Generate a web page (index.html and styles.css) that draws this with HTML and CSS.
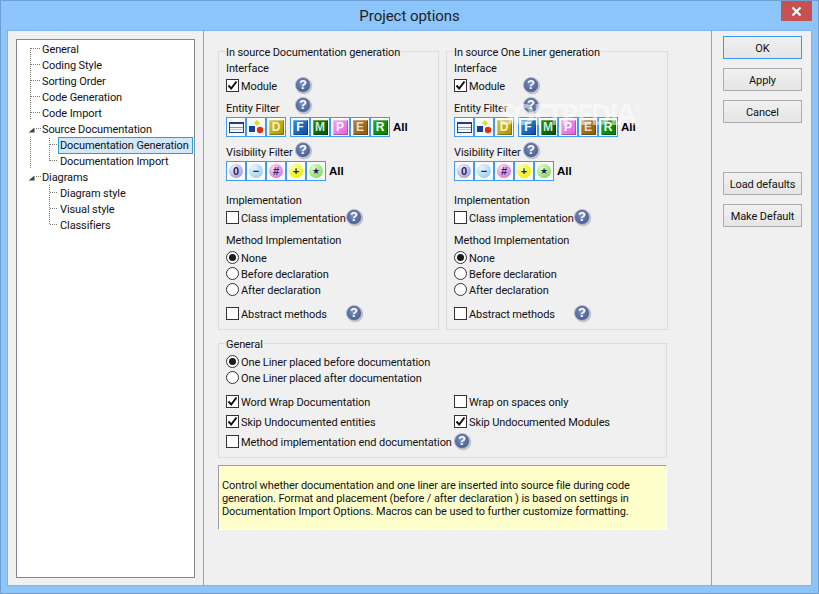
FILE: index.html
```
<!DOCTYPE html>
<html lang="en">
<head>
<meta charset="utf-8">
<title>Project options</title>
<link rel="stylesheet" href="styles.css">
</head>
<body>
<div class="window">
  <header class="titlebar">
    <span class="title">Project options</span>
    <span class="close"><svg width="11" height="11" viewBox="0 0 11 11"><path d="M1.500 1.500l8 8M9.500 1.500l-8 8" stroke="#fff" stroke-width="2.200" fill="none"/></svg></span>
  </header>
  <div class="client">
    <aside class="tree-pane">
      <div class="tree">
        <svg class="tree-lines" width="70" height="200" viewBox="0 0 70 200">
          <g stroke="#777" stroke-dasharray="1 1" fill="none">
            <path d="M13.500 8V80M13.500 97V128M32.500 98V121M32.500 145V185"/>
            <path d="M14 8.500H24M14 24.500H24M14 40.500H24M14 56.500H24M14 72.500H24M19 88.500H24M19 136.500H24M33 104.500H41M33 120.500H41M33 152.500H41M33 168.500H41M33 184.500H41"/>
          </g>
          <path d="M11.500 92.500L17.500 87.500V92.500Z" fill="#444"/>
          <path d="M11.500 140.500L17.500 135.500V140.500Z" fill="#444"/>
        </svg>
        <ul class="tree-list">
          <li class="l1">General</li>
          <li class="l1">Coding Style</li>
          <li class="l1">Sorting Order</li>
          <li class="l1">Code Generation</li>
          <li class="l1">Code Import</li>
          <li class="l1">Source Documentation</li>
          <li class="l2"><span class="selected">Documentation Generation</span></li>
          <li class="l2">Documentation Import</li>
          <li class="l1">Diagrams</li>
          <li class="l2">Diagram style</li>
          <li class="l2">Visual style</li>
          <li class="l2">Classifiers</li>
        </ul>
      </div>
    </aside>

    <main class="main">
      <div class="columns">
        <section class="group col-a">
          <div class="legend">In source Documentation generation</div>
          <div class="row">Interface</div>
          <div class="row mt2"><span class="check on"><svg width="11" height="11" viewBox="0 0 11 11"><path d="M1.500 5.500L4.200 8.500L9.500 1.500" stroke="#111" stroke-width="2" fill="none"/></svg></span><span class="lbl w54">Module</span><span class="help up1">?</span></div>
          <div class="row mt6"><span class="lbl w69">Entity Filter</span><span class="help up3">?</span></div>
          <div class="tools mt1">
            <span class="tool"><span class="i-doc"></span></span><span class="tool"><svg width="18" height="18" viewBox="0 0 18 18"><rect x="2" y="8" width="6" height="6" fill="#16409a"/><path d="M10 2L13 5L10 8L7 5Z" fill="#e8d820"/><circle cx="13" cy="12" r="3.200" fill="#e03010"/></svg></span><span class="tool"><span class="letter l-d">D</span></span>
            <span class="tool-gap"></span>
            <span class="tool"><span class="letter l-f">F</span></span><span class="tool"><span class="letter l-m">M</span></span><span class="tool"><span class="letter l-p">P</span></span><span class="tool"><span class="letter l-e">E</span></span><span class="tool"><span class="letter l-r">R</span></span>
            <span class="all">All</span>
          </div>
          <div class="row mt7"><span class="lbl w69">Visibility Filter</span><span class="help up2">?</span></div>
          <div class="tools mt1">
            <span class="tool"><span class="ball b-o">0</span></span><span class="tool"><span class="ball b-minus">−</span></span><span class="tool"><span class="ball b-hash">#</span></span><span class="tool"><span class="ball b-plus">+</span></span><span class="tool"><span class="ball b-star">★</span></span>
            <span class="all">All</span>
          </div>
          <div class="row mt11">Implementation</div>
          <div class="row mt2"><span class="check"></span><span class="lbl w105">Class implementation</span><span class="help up1">?</span></div>
          <div class="row mt6">Method Implementation</div>
          <div class="row mt2"><span class="radio on"></span><span class="lbl">None</span></div>
          <div class="row"><span class="radio"></span><span class="lbl">Before declaration</span></div>
          <div class="row"><span class="radio"></span><span class="lbl">After declaration</span></div>
          <div class="row mt8"><span class="check"></span><span class="lbl w105">Abstract methods</span><span class="help up1">?</span></div>
        </section>

        <section class="group col-b">
          <div class="legend">In source One Liner generation</div>
          <div class="row">Interface</div>
          <div class="row mt2"><span class="check on"><svg width="11" height="11" viewBox="0 0 11 11"><path d="M1.500 5.500L4.200 8.500L9.500 1.500" stroke="#111" stroke-width="2" fill="none"/></svg></span><span class="lbl w54">Module</span><span class="help up1">?</span></div>
          <div class="row mt6"><span class="lbl w69">Entity Filter</span><span class="help up3">?</span></div>
          <div class="tools mt1">
            <span class="tool"><span class="i-doc"></span></span><span class="tool"><svg width="18" height="18" viewBox="0 0 18 18"><rect x="2" y="8" width="6" height="6" fill="#16409a"/><path d="M10 2L13 5L10 8L7 5Z" fill="#e8d820"/><circle cx="13" cy="12" r="3.200" fill="#e03010"/></svg></span><span class="tool"><span class="letter l-d">D</span></span>
            <span class="tool-gap"></span>
            <span class="tool"><span class="letter l-f">F</span></span><span class="tool"><span class="letter l-m">M</span></span><span class="tool"><span class="letter l-p">P</span></span><span class="tool"><span class="letter l-e">E</span></span><span class="tool"><span class="letter l-r">R</span></span>
            <span class="all">All</span>
          </div>
          <div class="row mt7"><span class="lbl w69">Visibility Filter</span><span class="help up2">?</span></div>
          <div class="tools mt1">
            <span class="tool"><span class="ball b-o">0</span></span><span class="tool"><span class="ball b-minus">−</span></span><span class="tool"><span class="ball b-hash">#</span></span><span class="tool"><span class="ball b-plus">+</span></span><span class="tool"><span class="ball b-star">★</span></span>
            <span class="all">All</span>
          </div>
          <div class="row mt11">Implementation</div>
          <div class="row mt2"><span class="check"></span><span class="lbl w105">Class implementation</span><span class="help up1">?</span></div>
          <div class="row mt6">Method Implementation</div>
          <div class="row mt2"><span class="radio on"></span><span class="lbl">None</span></div>
          <div class="row"><span class="radio"></span><span class="lbl">Before declaration</span></div>
          <div class="row"><span class="radio"></span><span class="lbl">After declaration</span></div>
          <div class="row mt8"><span class="check"></span><span class="lbl w105">Abstract methods</span><span class="help up1">?</span></div>
          <div class="watermark">SOFTPEDIA<sup>®</sup></div>
        </section>
      </div>

      <section class="group general">
        <div class="legend">General</div>
        <div class="row mt2"><span class="radio on"></span><span class="lbl">One Liner placed before documentation</span></div>
        <div class="row"><span class="radio"></span><span class="lbl">One Liner placed after documentation</span></div>
        <div class="general-grid">
          <div class="row"><span class="check on"><svg width="11" height="11" viewBox="0 0 11 11"><path d="M1.500 5.500L4.200 8.500L9.500 1.500" stroke="#111" stroke-width="2" fill="none"/></svg></span><span class="lbl">Word Wrap Documentation</span></div>
          <div class="row"><span class="check"></span><span class="lbl">Wrap on spaces only</span></div>
          <div class="row"><span class="check on"><svg width="11" height="11" viewBox="0 0 11 11"><path d="M1.500 5.500L4.200 8.500L9.500 1.500" stroke="#111" stroke-width="2" fill="none"/></svg></span><span class="lbl">Skip Undocumented entities</span></div>
          <div class="row"><span class="check on"><svg width="11" height="11" viewBox="0 0 11 11"><path d="M1.500 5.500L4.200 8.500L9.500 1.500" stroke="#111" stroke-width="2" fill="none"/></svg></span><span class="lbl">Skip Undocumented Modules</span></div>
          <div class="row wide"><span class="check"></span><span class="lbl w213">Method implementation end documentation</span><span class="help up1">?</span></div>
        </div>
      </section>

      <div class="info">Control whether documentation and one liner are inserted into source file during code<br>generation. Format and placement (before / after declaration ) is based on settings in<br>Documentation Import Options. Macros can be used to further customize formatting.</div>
    </main>

    <aside class="side">
      <button class="btn default">OK</button>
      <button class="btn">Apply</button>
      <button class="btn">Cancel</button>
      <button class="btn push">Load defaults</button>
      <button class="btn">Make Default</button>
    </aside>
  </div>
</div>
</body>
</html>
```
FILE: styles.css
```
* { box-sizing: border-box; }
html, body { margin: 0; padding: 0; }
body {
  width: 819px;
  height: 594px;
  overflow: hidden;
  font-family: "Roboto", "Open Sans", sans-serif;
  font-size: 11px;
  letter-spacing: -0.1px;
  color: #111;
}
.window {
  width: 819px;
  height: 594px;
  background: #8bc5fb;
  border: 1px solid #6f9fd0;
  display: flex;
  flex-direction: column;
  padding: 0 6px 7px 6px;
}
.titlebar {
  height: 29px;
  flex: none;
  display: flex;
  justify-content: center;
  align-items: center;
  position: relative;
}
.title { font-size: 15px; letter-spacing: -0.05px; color: #222; padding-top: 1px; }
.close {
  position: absolute;
  right: 0;
  top: 0;
  width: 31px;
  height: 20px;
  background: #c75050;
  display: flex;
  align-items: center;
  justify-content: center;
}
.client {
  flex: 1;
  display: flex;
  background: #f0f0f0;
  border: 1px solid #7fb2e5;
  min-height: 0;
}
.tree-pane {
  width: 196px;
  flex: none;
  padding: 8px;
  border-right: 1px solid #a0a0a0;
}
.tree {
  height: 539px;
  background: #fff;
  border: 1px solid #828790;
  position: relative;
}
.tree-lines { position: absolute; left: 0; top: 0; }
.tree-list { list-style: none; margin: 0; padding: 1px 0 0 0; position: relative; }
.tree-list li { height: 16px; line-height: 18px; white-space: nowrap; }
.l1 { padding-left: 25px; }
.l2 { padding-left: 43px; }
.selected {
  display: inline-block;
  height: 17px;
  line-height: 15px;
  margin-left: -2px;
  padding: 0 3px 0 1px;
  background: #d1e8fa;
  border: 1px solid #26a0da;
  vertical-align: top;
}
.main {
  width: 507px;
  flex: none;
  padding: 20px 0 0 14px;
}
.columns { display: flex; gap: 7px; }
.group {
  border: 1px solid #dcdcdc;
  padding: 0 7px 7px 7px;
  position: relative;
}
.col-a { width: 221px; }
.col-b { width: 222px; }
.legend {
  height: 16px;
  line-height: 18px;
  margin: -8px 0 0 -1px;
  padding: 0 1px;
  width: fit-content;
  background: #f0f0f0;
  white-space: nowrap;
}
.row {
  height: 16px;
  line-height: 18px;
  display: flex;
  align-items: flex-start;
  white-space: nowrap;
}
.mt1 { margin-top: 1px; }
.mt2 { margin-top: 2px; }
.mt6 { margin-top: 6px; }
.mt7 { margin-top: 7px; }
.mt8 { margin-top: 8px; }
.mt11 { margin-top: 11px; }
.check {
  width: 13px;
  height: 13px;
  flex: none;
  border: 1px solid #333;
  background: #fff;
  margin: 1px 2px 0 0;
  display: flex;
  align-items: center;
  justify-content: center;
}
.radio {
  width: 13px;
  height: 13px;
  flex: none;
  border: 1px solid #333;
  border-radius: 50%;
  background: #fff;
  margin: 1px 2px 0 0;
  display: flex;
  align-items: center;
  justify-content: center;
}
.radio.on::after {
  content: "";
  width: 7px;
  height: 7px;
  border-radius: 50%;
  background: #1a1a1a;
}
.lbl { flex: none; }
.w54 { width: 54px; }
.w69 { width: 69px; }
.w105 { width: 105px; }
.w213 { width: 213px; }
.help {
  width: 16px;
  height: 16px;
  flex: none;
  border-radius: 50%;
  background: radial-gradient(circle at 45% 40%, #8292ba 0%, #556a9e 55%, #3f5388 100%);
  border: 1px solid #aab3c6;
  box-shadow: 1px 1px 1px rgba(60,70,100,.35);
  color: #fff;
  font: bold 13px/14px "Liberation Sans", sans-serif;
  letter-spacing: 0;
  text-align: center;
}
.up1 { margin-top: -1px; }
.up2 { margin-top: -2px; }
.up3 { margin-top: -3px; }
.tools { height: 20px; display: flex; align-items: center; }
.tool {
  width: 20px;
  height: 20px;
  flex: none;
  border: 1px solid #3f9cf5;
  background: #fafafa;
  display: flex;
  align-items: center;
  justify-content: center;
}
.tool-gap { width: 4px; flex: none; }
.all {
  font: bold 11.500px/20px "Liberation Sans", sans-serif;
  letter-spacing: 0;
  color: #000;
  margin-left: 3px;
}
.i-doc {
  width: 15px;
  height: 11px;
  border: 1px solid #243a7a;
  border-top-width: 2px;
  background: linear-gradient(#f4f8ff 0 3px, #4aa4ea 3px 4px, #f4f8ff 4px 5px, #a8d0f0 5px 6px, #f4f8ff 6px);
}
.letter {
  width: 15px;
  height: 15px;
  color: #fff;
  font: bold 12px/15px "Liberation Sans", sans-serif;
  letter-spacing: 0;
  text-align: center;
  box-shadow: inset 1px 1px 0 rgba(255,255,255,.3), inset -1px -1px 0 rgba(0,0,0,.25);
}
.l-d { background: linear-gradient(135deg, #d8c830, #a89000); color: #f6f2c0; }
.l-f { background: linear-gradient(135deg, #2f8ee8, #0e4aa0); }
.l-m { background: linear-gradient(135deg, #1a8a1a, #045004); color: #cfe8cf; }
.l-p { background: linear-gradient(135deg, #f8a0f4, #e060e0); }
.l-e { background: linear-gradient(135deg, #b88030, #8a5a08); color: #eadcc0; }
.l-r { background: linear-gradient(135deg, #18b018, #067a06); }
.ball {
  width: 14px;
  height: 14px;
  border-radius: 50%;
  font: bold 11px/14px "Liberation Sans", "DejaVu Sans", sans-serif;
  letter-spacing: 0;
  text-align: center;
  color: #24245a;
}
.b-o { background: radial-gradient(circle at 35% 30%, #f0f0ff, #b0a8dc 70%, #8c84b8); }
.b-minus { background: radial-gradient(circle at 35% 30%, #e8f6ff, #a0d4ee 70%, #7aacc8); }
.b-hash { background: radial-gradient(circle at 35% 30%, #fbd8fb, #e080e0 70%, #b860b8); }
.b-plus { background: radial-gradient(circle at 35% 30%, #ffffb0, #f2f200 70%, #c0b800); }
.b-star { background: radial-gradient(circle at 35% 30%, #dcffc8, #90dc70 70%, #68a850); font-size: 9px; }
.watermark {
  position: absolute;
  left: 52px;
  top: 46px;
  font: bold 29px/32px "Open Sans", sans-serif;
  letter-spacing: -2.500px;
  color: rgba(255,255,255,.5);
  pointer-events: none;
  white-space: nowrap;
}
.watermark sup { font-size: 9px; font-weight: normal; letter-spacing: 0; vertical-align: 14px; line-height: 0; }
.general {
  width: 449px;
  margin-top: 13px;
  padding-bottom: 7px;
}
.general-grid {
  display: grid;
  grid-template-columns: 228px 1fr;
  row-gap: 4px;
  margin-top: 8px;
}
.wide { grid-column: 1 / 3; }
.info {
  width: 449px;
  height: 65px;
  margin-top: 7px;
  background: #ffffcc;
  border-top: 1px solid #a0a0a0;
  border-left: 1px solid #a0a0a0;
  border-right: 1px solid #fff;
  border-bottom: 1px solid #fff;
  padding: 13px 0 0 3px;
  line-height: 13px;
  white-space: nowrap;
  color: #111;
}
.side {
  flex: 1;
  border-left: 1px solid #a0a0a0;
  padding: 5px 0 0 11px;
  display: flex;
  flex-direction: column;
  gap: 9px;
}
.btn {
  width: 79px;
  height: 23px;
  flex: none;
  font: 11px "Roboto", sans-serif;
  letter-spacing: -0.1px;
  color: #111;
  background: linear-gradient(#f0f0f0, #e5e5e5);
  border: 1px solid #acacac;
  padding: 1px 0 0 0;
}
.btn.default { border-color: #3399ff; }
.btn.push { margin-top: 40px; }
```
